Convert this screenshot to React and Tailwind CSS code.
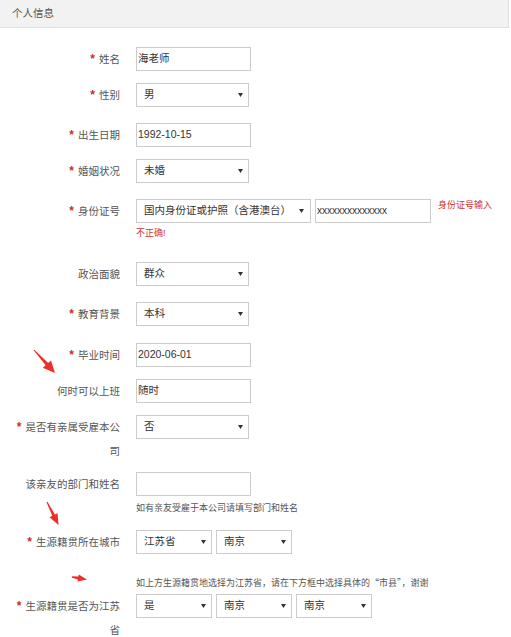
import React from "react";

function Arrow({ x1, y1, x2, y2, head = 10, hw = 9, w1 = 1, w2 = 3 }) {
  const dx = x2 - x1, dy = y2 - y1;
  const L = Math.hypot(dx, dy);
  const ux = dx / L, uy = dy / L;
  const px = -uy, py = ux;
  const bx = x2 - ux * head, by = y2 - uy * head;
  const pts = [
    [x1 + (px * w1) / 2, y1 + (py * w1) / 2],
    [bx + (px * w2) / 2, by + (py * w2) / 2],
    [bx + (px * hw) / 2, by + (py * hw) / 2],
    [x2, y2],
    [bx - (px * hw) / 2, by - (py * hw) / 2],
    [bx - (px * w2) / 2, by - (py * w2) / 2],
    [x1 - (px * w1) / 2, y1 - (py * w1) / 2],
  ];
  return <polygon points={pts.map((p) => p.join(",")).join(" ")} fill="#ec2f2a" />;
}

function Caret() {
  return (
    <svg width="5" height="4" viewBox="0 0 5 4" className="shrink-0">
      <polygon points="0,0 5,0 2.5,4" fill="#333" />
    </svg>
  );
}

function Select({ value, w = "w-[113px]", extra = "" }) {
  return (
    <div
      className={`${w} h-[24px] border border-[#cccccc] bg-white flex items-center justify-between pl-[7px] pr-[5px] text-[10.5px] text-[#333] ${extra}`}
    >
      <span className="whitespace-nowrap">{value}</span>
      <Caret />
    </div>
  );
}

function Input({ value, w = "w-[115px]", extra = "" }) {
  return (
    <div
      className={`${w} h-[24px] border border-[#cccccc] bg-white flex items-center pl-[1px] text-[10.5px] text-[#333] ${extra}`}
    >
      <span className="whitespace-nowrap">{value}</span>
    </div>
  );
}

function Label({ text, req }) {
  return (
    <div className="w-[120px] shrink-0 pl-[12px] text-right leading-[24px] text-[10.5px] text-[#555]">
      {req && <span className="text-[#c9302c] text-[12px] font-bold mr-[4px]">*</span>}
      {text}
    </div>
  );
}

function Row({ label, req, children, mb }) {
  return (
    <div className={`flex ${mb}`}>
      <Label text={label} req={req} />
      <div className="ml-[16px] flex flex-col">{children}</div>
    </div>
  );
}

export default function App() {
  return (
    <div className="relative w-[511px] h-[637px] overflow-hidden bg-white font-['Liberation_Sans','Noto_Sans_CJK_SC',sans-serif]">
      <div className="w-[509px] h-[28px] bg-[#f2f2f2] border-b border-r border-[#e0e0e0] flex items-center pl-[12px] text-[10.5px] text-[#555]">
        个人信息
      </div>

      <div className="pt-[19px]">
        <Row label="姓名" req mb="mb-[12px]">
          <Input value="海老师" />
        </Row>
        <Row label="性别" req mb="mb-[16px]">
          <Select value="男" />
        </Row>
        <Row label="出生日期" req mb="mb-[12px]">
          <Input value="1992-10-15" />
        </Row>
        <Row label="婚姻状况" req mb="mb-[16px]">
          <Select value="未婚" />
        </Row>
        <Row label="身份证号" req mb="mb-[23px]">
          <div className="flex items-start">
            <Select value="国内身份证或护照（含港澳台）" w="w-[175px]" extra="pr-[6px]" />
            <Input value={<span className="text-[10px]">xxxxxxxxxxxxxx</span>} w="w-[116px]" extra="ml-[4px]" />
            <span className="ml-[7px] leading-[12px] text-[9px] text-[#d0312d] whitespace-nowrap">身份证号输入</span>
          </div>
          <div className="mt-[4px] leading-[12px] text-[9px] text-[#d0312d]">不正确!</div>
        </Row>
        <Row label="政治面貌" mb="mb-[16px]">
          <Select value="群众" />
        </Row>
        <Row label="教育背景" req mb="mb-[17px]">
          <Select value="本科" />
        </Row>
        <Row label="毕业时间" req mb="mb-[12px]">
          <Input value="2020-06-01" />
        </Row>
        <Row label="何时可以上班" mb="mb-[12px]">
          <Input value="随时" />
        </Row>
        <Row label="是否有亲属受雇本公司" req mb="mb-[9px]">
          <Select value="否" />
        </Row>
        <Row label="该亲友的部门和姓名" mb="mb-[16px]">
          <Input value="" />
          <div className="mt-[6px] leading-[12px] text-[9px] text-[#555] whitespace-nowrap">
            如有亲友受雇于本公司请填写部门和姓名
          </div>
        </Row>
        <Row label="生源籍贯所在城市" req mb="mb-[23px]">
          <div className="flex gap-[4px]">
            <Select value="江苏省" w="w-[76px]" />
            <Select value="南京" w="w-[76px]" />
          </div>
        </Row>
        <div className="flex mb-[5px]">
          <div className="w-[120px] shrink-0" />
          <div className="ml-[16px] leading-[12px] text-[9px] text-[#555] whitespace-nowrap font-['Noto_Sans_CJK_SC',sans-serif]">
            如上方生源籍贯地选择为江苏省，请在下方框中选择具体的“市县”，谢谢
          </div>
        </div>
        <Row label="生源籍贯是否为江苏省" req mb="mb-0">
          <div className="flex gap-[4px]">
            <Select value="是" w="w-[76px]" />
            <Select value="南京" w="w-[76px]" />
            <Select value="南京" w="w-[76px]" />
          </div>
        </Row>
      </div>

      <svg className="absolute left-0 top-0 pointer-events-none" width="511" height="637">
        <Arrow x1={34} y1={350} x2={55} y2={373} head={12} hw={11} w1={1} w2={3.5} />
        <Arrow x1={47} y1={502} x2={58.5} y2={525} head={11} hw={9} w1={1} w2={3} />
        <Arrow x1={72} y1={577} x2={87} y2={579.5} head={9} hw={7} w1={1.5} w2={3} />
      </svg>
    </div>
  );
}
